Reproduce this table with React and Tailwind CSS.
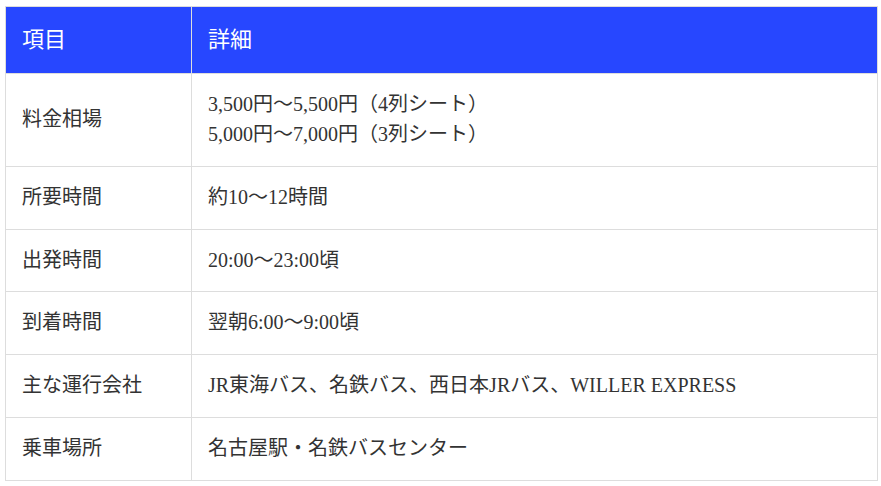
export default function App() {
  const rows = [
    ["料金相場", ["3,500円～5,500円（4列シート）", "5,000円～7,000円（3列シート）"]],
    ["所要時間", ["約10～12時間"]],
    ["出発時間", ["20:00～23:00頃"]],
    ["到着時間", ["翌朝6:00～9:00頃"]],
    ["主な運行会社", ["JR東海バス、名鉄バス、西日本JRバス、WILLER EXPRESS"]],
    ["乗車場所", ["名古屋駅・名鉄バスセンター"]],
  ];
  return (
    <div
      className="bg-white w-[881px] h-[486px] pt-[6px] pl-[5px]"
      style={{ fontFamily: '"Liberation Serif", "Noto Sans CJK JP", serif' }}
    >
      <table className="w-[873px] border-collapse text-[#333]">
        <thead>
          <tr className="bg-[#2747ff] text-white">
            <th className="w-[186px] border border-[#ddd] px-4 py-4 text-left font-normal text-[22px] leading-[34px]">項目</th>
            <th className="border border-[#ddd] px-4 py-4 text-left font-normal text-[22px] leading-[34px]">詳細</th>
          </tr>
        </thead>
        <tbody>
          {rows.map(([k, v]) => (
            <tr key={k}>
              <td className="border border-[#ddd] px-4 py-4 text-[20px] leading-[29.85px] align-middle">{k}</td>
              <td className="border border-[#ddd] px-4 py-4 text-[20px] leading-[29.85px] align-middle">
                {v.map((line) => (
                  <div key={line}>{line}</div>
                ))}
              </td>
            </tr>
          ))}
        </tbody>
      </table>
    </div>
  );
}
